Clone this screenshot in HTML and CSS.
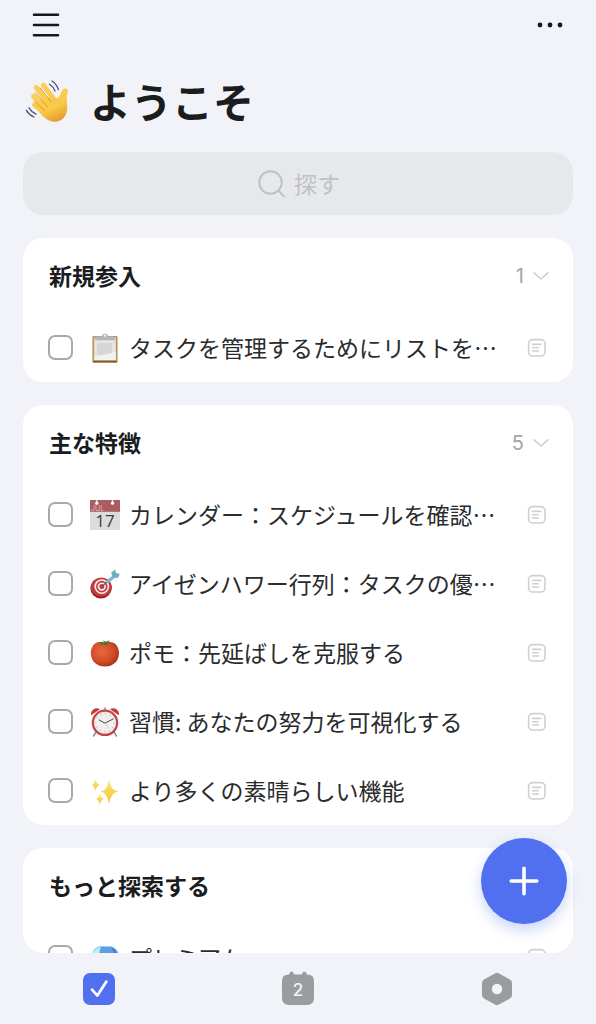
FILE: index.html
```html
<!DOCTYPE html>
<html lang="ja">
<head>
    <meta charset="UTF-8">
    <meta name="viewport" content="width=device-width, initial-scale=1">
    <title>ようこそ</title>
    <link rel="stylesheet" href="styles.css">
</head>
<body>
    <svg class="defs" aria-hidden="true">
        <defs>
            <symbol id="note" viewBox="0 0 20 20">
                <rect x="1.6" y="1.6" width="16.4" height="16.4" rx="4"/>
                <path d="M5.5 6.4h8.3M5.5 9.8h5.6M5.5 13h6"/>
            </symbol>
            <symbol id="arrow" viewBox="0 0 16 10">
                <path d="M1.2 1.8L8 8L14.8 1.8"/>
            </symbol>
            <linearGradient id="skin" gradientUnits="userSpaceOnUse" x1="12" y1="5" x2="30" y2="44">
                <stop offset="0" stop-color="#fbd257"/>
                <stop offset="0.7" stop-color="#f9c846"/>
                <stop offset="1" stop-color="#e59a2e"/>
            </linearGradient>
            <radialGradient id="red" cx="0.4" cy="0.4" r="0.7">
                <stop offset="0" stop-color="#e8693e"/>
                <stop offset="0.6" stop-color="#d04c28"/>
                <stop offset="1" stop-color="#982c16"/>
            </radialGradient>
            <linearGradient id="gold" x1="0" y1="0" x2="0" y2="1">
                <stop offset="0" stop-color="#fbe47c"/>
                <stop offset="1" stop-color="#f2c52f"/>
            </linearGradient>
        </defs>
    </svg>

    <header class="top">
        <button class="icon-btn" aria-label="メニュー">
            <svg width="28" height="26" viewBox="0 0 28 26"><path d="M2 2.7h24M2 13h24M2 23.2h24" stroke="#17181b" stroke-width="2.6" stroke-linecap="round"/></svg>
        </button>
        <button class="icon-btn" aria-label="その他">
            <svg width="28" height="8" viewBox="0 0 28 8"><g fill="#17181b"><circle cx="4" cy="4" r="2.4"/><circle cx="14" cy="4" r="2.4"/><circle cx="24" cy="4" r="2.4"/></g></svg>
        </button>
    </header>

    <h1 class="title">
        <svg width="46" height="46" viewBox="0 0 46 46" aria-hidden="true">
            <g stroke="url(#skin)" stroke-linecap="round" fill="none">
                <path d="M18.4 7.2L31 24" stroke-width="5"/>
                <path d="M11.2 9.6L26 29" stroke-width="5"/>
                <path d="M8.6 18.2L22 33" stroke-width="5"/>
                <path d="M9.4 26.8L22 37" stroke-width="4.8"/>
            </g>
            <path d="M14 22L27 18.2C29.5 21.5 33 21 35 17.5C36.3 14.6 36.8 10 40.3 10.4C43.6 10.8 43.2 13.8 42 17C41 20.5 42.4 24.5 42.3 29.5C42.2 38 37 43.6 29.8 43.8C23 44 16.8 38 12 31.5Z" fill="url(#skin)"/>
            <path d="M15 9.8L26 23.6M10.4 15L22.5 28.6M9.8 23.4L20 33" stroke="#d8982c" stroke-width="1" fill="none" stroke-linecap="round"/>
            <path d="M24.5 6.2Q28.4 8.6 30 13M27 3Q31.6 6 33.4 11.6M4 29.8Q6.5 34 11 36.2M1.4 32.4Q4 37 9 39" stroke="#4b5368" stroke-width="1.3" fill="none" stroke-linecap="round"/>
        </svg>
        <span>ようこそ</span>
    </h1>

    <label class="search">
        <svg width="30" height="30" viewBox="0 0 30 30" fill="none" stroke="#c0c1c5" stroke-width="2" stroke-linecap="round" aria-hidden="true"><circle cx="14.5" cy="13.5" r="11.2"/><path d="M22.6 21.8L28 27.4"/></svg>
        <input type="text" placeholder="探す" aria-label="探す">
    </label>

    <main class="list">
        <section class="card">
            <div class="card-head">
                <h2>新規参入</h2>
                <button class="count">1<svg class="arrow"><use href="#arrow"/></svg></button>
            </div>
            <div class="row">
                <input type="checkbox" id="t1">
                <label for="t1">
                    <svg class="emoji" viewBox="0 0 30 30" aria-hidden="true">
                        <rect x="2.4" y="3" width="25.2" height="26.6" rx="1.4" fill="#bd9657"/>
                        <path d="M3 28.8h24" stroke="#7d5a2b" stroke-width="1.6"/>
                        <rect x="4.2" y="4.5" width="21.6" height="22.6" fill="#e6e6e7"/>
                        <rect x="7" y="10" width="15" height="12" fill="#d6d6d8"/>
                        <path d="M4.2 27.1V24L25.8 19V27.1Z" fill="#f2f2f3"/>
                        <path d="M5 7.2V4.6Q5 3.4 8 3.4H12Q12 0.8 15 0.8T18 3.4H22Q25 3.4 25 4.6V7.2Z" fill="#b4b6b9"/>
                        <circle cx="15" cy="2.8" r="1" fill="#fff"/>
                    </svg>
                    <span>タスクを管理するためにリストを…</span>
                </label>
                <svg class="note"><use href="#note"/></svg>
            </div>
        </section>

        <section class="card">
            <div class="card-head">
                <h2>主な特徴</h2>
                <button class="count">5<svg class="arrow"><use href="#arrow"/></svg></button>
            </div>
            <div class="row">
                <input type="checkbox" id="t2">
                <label for="t2">
                    <svg class="emoji" viewBox="0 0 30 30" aria-hidden="true">
                        <rect width="30" height="30" fill="#dcdcdd"/>
                        <rect width="30" height="11.8" fill="#ab5c5e"/>
                        <path d="M6.8 0v3M22.5 0v3" stroke="#e8e4e4" stroke-width="1.4"/>
                        <circle cx="6.8" cy="3.2" r="1.6" fill="#fff"/>
                        <circle cx="22.5" cy="3.2" r="1.6" fill="#fff"/>
                        <text x="1" y="11" font-size="7" fill="#dcbcbc">JUL</text>
                        <text class="day" x="15" y="26.8" font-size="17" text-anchor="middle" fill="#3c3c3e">17</text>
                    </svg>
                    <span>カレンダー：スケジュールを確認…</span>
                </label>
                <svg class="note"><use href="#note"/></svg>
            </div>
            <div class="row">
                <input type="checkbox" id="t3">
                <label for="t3">
                    <svg class="emoji" viewBox="0 0 30 30" aria-hidden="true">
                        <ellipse cx="11" cy="19.4" rx="10.6" ry="10.2" fill="#982126"/>
                        <ellipse cx="11.4" cy="18" rx="10.6" ry="9.6" fill="#c23a3d"/>
                        <circle cx="11.8" cy="17.6" r="7.4" fill="#f7eeee"/>
                        <circle cx="11.8" cy="17.6" r="5.8" fill="#c23a3d"/>
                        <circle cx="11.8" cy="17.6" r="4.2" fill="#f7eeee"/>
                        <circle cx="11.8" cy="17.6" r="2.5" fill="#c23a3d"/>
                        <path d="M12 17.4L19 11.5" stroke="#555d66" stroke-width="1.2"/>
                        <path d="M17.8 12.4L25 6.8" stroke="#74bccb" stroke-width="3.2" stroke-linecap="round"/>
                        <path d="M22 6.5L21.2 3.4L25.4 0.6L26 4L29.8 4.8L28 9L23.5 8.4Z" fill="#6bb0c1"/>
                    </svg>
                    <span>アイゼンハワー行列：タスクの優…</span>
                </label>
                <svg class="note"><use href="#note"/></svg>
            </div>
            <div class="row">
                <input type="checkbox" id="t4">
                <label for="t4">
                    <svg class="emoji" viewBox="0 0 30 30" aria-hidden="true">
                        <path d="M15 4.2C22 2.2 29 6 29 15C29 23.8 22.5 28.5 15 28.5S0.8 23.8 0.8 15C0.8 6 8 2.2 15 4.2Z" fill="url(#red)"/>
                        <path d="M14.6 5.5L13 2.2L15.5 3.8L20 2.2L17.5 4.8L21.5 6.2L16.4 6L17 8L14 6.4L9.5 7.4L11.5 5.4L6.5 4.6L11 4Z" fill="#4e7434"/>
                    </svg>
                    <span>ポモ：先延ばしを克服する</span>
                </label>
                <svg class="note"><use href="#note"/></svg>
            </div>
            <div class="row">
                <input type="checkbox" id="t5">
                <label for="t5">
                    <svg class="emoji" viewBox="0 0 30 30" aria-hidden="true">
                        <path d="M6 25L3.5 29M24 25L26.5 29M15 1v3" stroke="#8d8d90" stroke-width="1.5" stroke-linecap="round"/>
                        <path d="M1.2 8.2C0 3.5 5.5-0.8 10 2.2ZM28.8 8.2C30 3.5 24.5-0.8 20 2.2Z" fill="#c63a3c"/>
                        <circle cx="15" cy="15.8" r="13.3" fill="#c44446"/>
                        <circle cx="15" cy="15.8" r="11" fill="#f0efee"/>
                        <circle cx="15" cy="15.8" r="9.2" fill="none" stroke="#b4b4b4" stroke-width="1.6" stroke-dasharray="0.7 4.117"/>
                        <path d="M9.2 13L15 16.2L23 12" stroke="#434a4e" stroke-width="1" fill="none" stroke-linecap="round"/>
                        <path d="M15 16.2L19 21.5" stroke="#cf9a9b" stroke-width="0.5"/>
                    </svg>
                    <span>習慣: あなたの努力を可視化する</span>
                </label>
                <svg class="note"><use href="#note"/></svg>
            </div>
            <div class="row">
                <input type="checkbox" id="t6">
                <label for="t6">
                    <svg class="emoji" viewBox="0 0 30 30" aria-hidden="true">
                        <g fill="url(#gold)">
                            <path d="M19 3Q20.2 14.6 28.5 15.6Q20.2 16.8 19 28.5Q17.8 16.8 10.5 15.6Q17.8 14.6 19 3Z"/>
                            <path d="M5.5 3Q6.2 8.2 10 9Q6.2 10 5.5 15Q4.8 10 1.5 9Q4.8 8.2 5.5 3Z"/>
                            <path d="M9.8 17.5Q10.6 22.2 14 23Q10.6 24 9.8 29Q9 24 6 23Q9 22.2 9.8 17.5Z"/>
                        </g>
                    </svg>
                    <span>より多くの素晴らしい機能</span>
                </label>
                <svg class="note"><use href="#note"/></svg>
            </div>
        </section>

        <section class="card">
            <div class="card-head">
                <h2>もっと探索する</h2>
            </div>
            <div class="row">
                <input type="checkbox" id="t7">
                <label for="t7">
                    <svg class="emoji" viewBox="0 0 30 30" aria-hidden="true">
                        <path d="M1 12Q4 4 10 3H21Q27 5 29.4 12L15 29Z" fill="#8fd3f5"/>
                        <path d="M11 4H21L24 12H9Z" fill="#5c9fe0"/>
                        <path d="M21 4Q27 6 28 12H24Z" fill="#4583cf"/>
                        <path d="M4 8L10 4L9 12L1 12Z" fill="#c3f0f6"/>
                    </svg>
                    <span>プレミアム</span>
                </label>
                <svg class="note"><use href="#note"/></svg>
            </div>
        </section>
    </main>

    <button class="add" aria-label="追加">
        <svg width="30" height="30" viewBox="0 0 30 30"><path d="M15 2.2v25.6M2.2 15h25.6" stroke="#fff" stroke-width="3.6" stroke-linecap="round"/></svg>
    </button>

    <nav class="tabs">
        <a href="#tasks" aria-label="タスク">
            <svg width="36" height="36" viewBox="0 0 36 36"><rect x="2" y="2" width="32" height="32" rx="7" fill="#5070ef"/><path d="M11 18.6L16.4 24.6L25.4 10.6" fill="none" stroke="#fff" stroke-width="2.7" stroke-linecap="round" stroke-linejoin="round"/></svg>
        </a>
        <a href="#calendar" aria-label="カレンダー">
            <svg width="36" height="36" viewBox="0 0 36 36"><path d="M9 3.6L10.4 0.8H12.6L14.4 3.4H21.6L23.4 0.8H25.6L27 3.6Q34 3.6 34 10V27Q34 34 27 34H9Q2 34 2 27V10Q2 3.6 9 3.6Z" fill="#9b9ca0"/><text x="18" y="25.2" text-anchor="middle" font-size="17" font-weight="500" fill="#f1f3f8">2</text></svg>
        </a>
        <a href="#settings" aria-label="設定">
            <svg width="36" height="36" viewBox="0 0 36 36"><path d="M16 2.4Q18 1.3 20 2.4L31 8.6Q33 9.8 33 12V24Q33 26.2 31 27.4L20 33.6Q18 34.7 16 33.6L5 27.4Q3 26.2 3 24V12Q3 9.8 5 8.6Z" fill="#9b9ca0"/><circle cx="18" cy="18" r="5.2" fill="#f1f3f8"/></svg>
        </a>
    </nav>
</body>
</html>
```
FILE: styles.css
```css
*{
    margin:0;
    padding:0;
    box-sizing:border-box;
}
body{
    display:flex;
    flex-direction:column;
    height:100vh;
    padding:0 23px;
    background-color:#f1f3f8;
    color:#1b1c1e;
    font-family:"Noto Sans CJK JP",sans-serif;
    font-size:23px;
}
button{
    border:0;
    background:none;
    font:inherit;
    cursor:pointer;
}
svg{
    display:block;
    flex:none;
}
svg text{
    font-family:Inter,sans-serif;
}
svg .day{
    font-family:"Open Sans",sans-serif;
}
.defs{
    position:absolute;
    width:0;
    height:0;
}
.top{
    display:flex;
    justify-content:space-between;
    align-items:center;
    height:50px;
    padding:0 9px;
}
.title{
    display:flex;
    align-items:center;
    gap:19px;
    height:102px;
    padding:0 2px;
    font-size:41px;
    line-height:60px;
}
.title span{
    padding-bottom:2px;
}
.search{
    display:flex;
    justify-content:center;
    align-items:center;
    gap:8px;
    height:63px;
    flex:none;
    border-radius:20px;
    background-color:#e7e8ec;
}
.search input{
    width:46px;
    padding-bottom:2px;
    border:0;
    outline:0;
    background:none;
    font:inherit;
    color:#1b1c1e;
}
.search input::placeholder{
    color:#c0c1c5;
    opacity:1;
}
.list{
    flex:1;
    min-height:0;
    margin-top:23px;
    overflow:hidden;
    border-radius:20px;
}
.card{
    margin-bottom:23px;
    border-radius:20px;
    background-color:#fff;
}
.card-head{
    display:flex;
    justify-content:space-between;
    align-items:center;
    height:75px;
    padding:0 24px 0 26px;
}
.card-head h2{
    padding-bottom:2px;
    font-size:23px;
    line-height:34px;
}
.count{
    display:flex;
    align-items:center;
    gap:9px;
    color:#a4a4a6;
    font-family:Inter,sans-serif;
    font-size:20px;
}
.arrow{
    width:16px;
    height:10px;
    fill:none;
    stroke:#cfcfd1;
    stroke-width:1.6;
    stroke-linecap:round;
}
.row{
    display:flex;
    align-items:center;
    height:69px;
    padding:0 26px 0 25px;
}
.row input{
    appearance:none;
    flex:none;
    width:25px;
    height:25px;
    border:2px solid #a9a9ab;
    border-radius:7px;
}
.row input:checked{
    border-color:#5070ef;
    background-color:#5070ef;
}
.row label{
    display:flex;
    flex:1;
    align-items:center;
    gap:9px;
    min-width:0;
    margin-left:17px;
    color:#2a2b2d;
    line-height:34px;
    white-space:nowrap;
}
.row label span{
    padding-bottom:2px;
}
.emoji{
    width:30px;
    height:30px;
}
.note{
    width:20px;
    height:20px;
    fill:none;
    stroke:#d0d0d2;
    stroke-width:1.6;
    stroke-linecap:round;
}
.add{
    position:fixed;
    right:29px;
    bottom:100px;
    display:flex;
    justify-content:center;
    align-items:center;
    width:86px;
    height:86px;
    border-radius:50%;
    background-color:#5070ef;
    box-shadow:0 6px 14px rgba(80,112,239,.3);
}
.tabs{
    display:grid;
    grid-template-columns:repeat(3,1fr);
    align-items:center;
    height:71px;
    margin:0 -23px;
}
.tabs a{
    display:flex;
    justify-content:center;
}
```
